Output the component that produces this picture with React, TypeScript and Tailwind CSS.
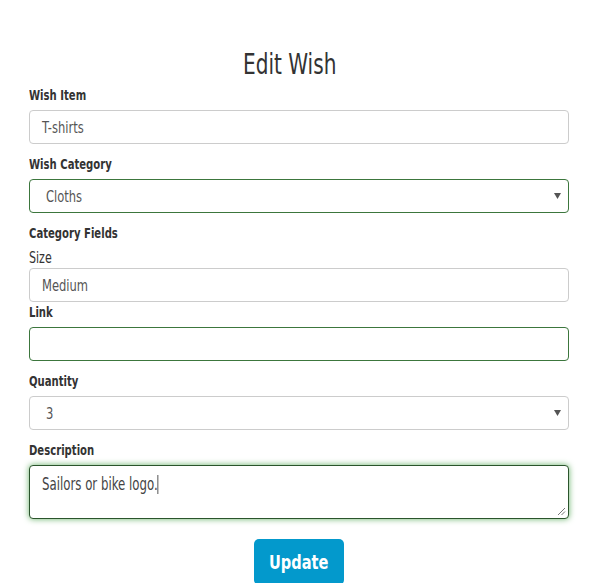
import React from "react";

const font = { fontFamily: '"DejaVu Sans Condensed", "DejaVu Sans", sans-serif' };

function Label({ children, bold = true, mb = true }: { children: React.ReactNode; bold?: boolean; mb?: boolean }) {
  return (
    <div
      className={`h-[20px] leading-[20px] text-[#333] whitespace-nowrap ${bold ? "font-bold text-[14px]" : "font-normal text-[15px]"} ${mb ? "mb-[5px]" : ""}`}
    >
      <span className={`inline-block origin-left ${bold ? "scale-x-[0.8]" : "scale-x-[0.82]"}`}>{children}</span>
    </div>
  );
}

function Field({ value, green = false }: { value?: string; green?: boolean }) {
  return (
    <div
      className={`h-[34px] rounded-[4px] border bg-white flex items-center pl-[12px] pt-[2px] text-[16px] text-[#555] ${
        green ? "border-[#3c763d]" : "border-[#ccc]"
      }`}
    >
      {value ? <span className="inline-block origin-left scale-x-[0.8]">{value}</span> : null}
    </div>
  );
}

function Select({ value, green = false }: { value: string; green?: boolean }) {
  return (
    <div
      className={`h-[34px] rounded-[4px] border bg-white flex items-center justify-between pl-[16px] pr-[7px] pt-[2px] text-[16px] text-[#555] ${
        green ? "border-[#3c763d]" : "border-[#ccc]"
      }`}
    >
      <span className="inline-block origin-left scale-x-[0.8]">{value}</span>
      <svg width="7" height="6" viewBox="0 0 7 6" className="mb-[2px]">
        <polygon points="0,0 7,0 3.5,6" fill="#555" />
      </svg>
    </div>
  );
}

export default function App() {
  return (
    <div className="w-[598px] h-[583px] bg-white overflow-hidden" style={font}>
      <div className="px-[29px] pt-[47px]">
        <h1 className="text-center text-[29px] leading-[34px] text-[#333] font-normal mb-[4px] pr-[19px]">
          <span className="inline-block origin-center scale-x-[0.77]">Edit Wish</span>
        </h1>

        <div className="flex flex-col gap-[10px]">
          <div>
            <Label>Wish Item</Label>
            <Field value="T-shirts" />
          </div>
          <div>
            <Label>Wish Category</Label>
            <Select value="Cloths" green />
          </div>
          <div className="-mb-[10px]">
            <Label>Category Fields</Label>
            <Label bold={false} mb={false}>Size</Label>
            <Field value="Medium" />
          </div>
          <div>
            <Label>Link</Label>
            <Field green />
          </div>
          <div>
            <Label>Quantity</Label>
            <Select value="3" />
          </div>
          <div>
            <Label>Description</Label>
            <div className="relative h-[54px] rounded-[4px] border border-[#2b542c] bg-white shadow-[0_0_6px_#67b168] pl-[12px] pt-[6px] text-[17px] leading-[24px] text-[#444] whitespace-nowrap">
              <span className="inline-block origin-left scale-x-[0.77]">
                Sailors or bike logo.
                <span className="inline-block w-px h-[19px] bg-[#222] align-[-4px]" />
              </span>
              <svg width="9" height="9" viewBox="0 0 9 9" className="absolute right-[2px] bottom-[2px]">
                <line x1="1" y1="8" x2="8" y2="1" stroke="#777" strokeWidth="1" />
                <line x1="4.5" y1="8" x2="8" y2="4.5" stroke="#777" strokeWidth="1" />
              </svg>
            </div>
          </div>
        </div>

        <div className="flex justify-center mt-[20px]">
          <button className="w-[90px] h-[46px] rounded-[5px] bg-[#0399cc] text-white font-bold text-[20px] leading-[46px]">
            <span className="inline-block origin-center scale-x-[0.81]">Update</span>
          </button>
        </div>
      </div>
    </div>
  );
}
